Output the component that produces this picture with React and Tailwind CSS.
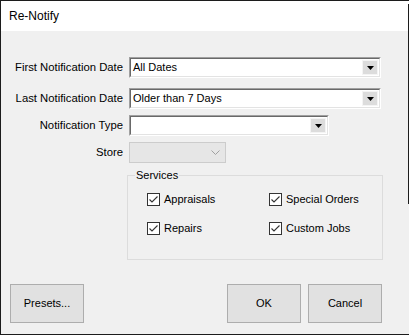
import React from "react";

const font = { fontFamily: '"Liberation Sans", Arial, sans-serif' };

function DropArrow() {
  return (
    <div className="w-[16px] h-[15px] bg-[#dcdcdc] border border-[#f4f4f4] flex items-center justify-center">
      <svg width="7" height="4" viewBox="0 0 7 4">
        <polygon points="0,0 7,0 3.5,4" fill="#000" />
      </svg>
    </div>
  );
}

function Combo({ value, width }) {
  return (
    <div className={`${width} h-[21px] border-t border-l border-[#a0a0a0] border-b border-r border-b-white border-r-white`}>
      <div className="h-full border-t border-l border-[#696969] border-b border-r border-b-[#e3e3e3] border-r-[#e3e3e3] bg-white flex items-center pl-[2px] pr-[1px]">
        <span className="flex-1 text-[11px] leading-none">{value}</span>
        <DropArrow />
      </div>
    </div>
  );
}

function Row({ label, children, className = "" }) {
  return (
    <div className={`flex items-center h-[21px] ${className}`}>
      <div className="w-[123px] text-right text-[11.3px] pr-[1px]">{label}</div>
      <div className="ml-[5px]">{children}</div>
    </div>
  );
}

function Check({ label }) {
  return (
    <div className="flex items-center h-[13px]">
      <div className="w-[13px] h-[13px] border border-[#333333] bg-white flex items-center justify-center">
        <svg width="11" height="11" viewBox="0 0 11 11">
          <polyline points="1.5,5.5 4,8 9.5,2.5" fill="none" stroke="#333333" strokeWidth="1.1" />
        </svg>
      </div>
      <span className="ml-[4px] text-[11px]">{label}</span>
    </div>
  );
}

function Button({ children, className = "" }) {
  return (
    <div className={`w-[74px] h-[39px] bg-[#e1e1e1] border border-[#adadad] flex items-center justify-center text-[11px] ${className}`}>
      {children}
    </div>
  );
}

export default function App() {
  return (
    <div className="w-[410px] h-[336px] bg-white relative" style={font}>
      <div className="w-[409px] h-[335px] border-l border-t border-b border-[#1c1c1c] flex flex-col">
        <div className="h-[30px] bg-white flex items-center pl-[8px] text-[12px] text-black">
          Re-Notify
        </div>
        <div className="flex-1 bg-[#f0f0f0] pt-[26px] text-black">
          <Row label="First Notification Date">
            <Combo value="All Dates" width="w-[252px]" />
          </Row>
          <Row label="Last Notification Date" className="mt-[10px]">
            <Combo value="Older than 7 Days" width="w-[252px]" />
          </Row>
          <Row label="Notification Type" className="mt-[6px]">
            <Combo value="" width="w-[200px]" />
          </Row>
          <Row label="Store" className="mt-[6px]">
            <div className="w-[97px] h-[21px] bg-[#e6e6e6] border border-[#cccccc] flex items-center justify-end pr-[5px]">
              <svg width="9" height="5" viewBox="0 0 9 5">
                <polyline points="0.5,0.5 4.5,4.5 8.5,0.5" fill="none" stroke="#a0a0a0" strokeWidth="1" />
              </svg>
            </div>
          </Row>

          <fieldset className="ml-[126px] mt-[5px] w-[256px] border border-[#dcdcdc] pb-[24px]">
            <legend className="ml-[7px] px-[1px] text-[11px] leading-[14px]">Services</legend>
            <div className="grid grid-cols-[122px_auto] gap-y-[16px] mt-[11px] ml-[19px]">
              <Check label="Appraisals" />
              <Check label="Special Orders" />
              <Check label="Repairs" />
              <Check label="Custom Jobs" />
            </div>
          </fieldset>

          <div className="flex mt-[24px]">
            <Button className="ml-[9px]">Presets...</Button>
            <Button className="ml-[143px]">OK</Button>
            <Button className="ml-[7px]">Cancel</Button>
          </div>
        </div>
      </div>
      <div className="absolute right-[1px] top-[4px] w-[1px] h-[200px] bg-[#1c1c1c]" />
    </div>
  );
}
